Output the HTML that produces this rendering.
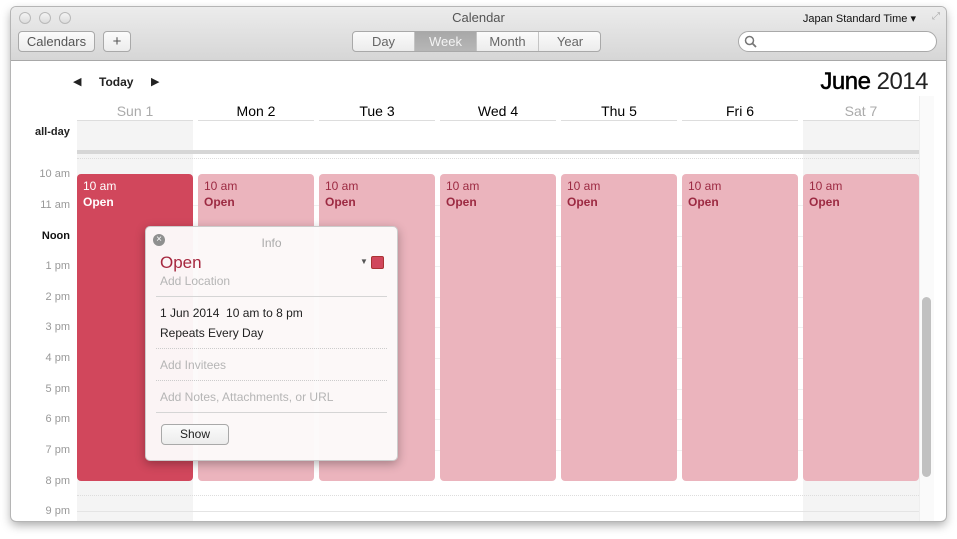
<!DOCTYPE html>
<html><head><style>
*{margin:0;padding:0;box-sizing:border-box}
body{width:957px;height:539px;background:#fff;font-family:"Liberation Sans",sans-serif;position:relative;overflow:hidden}
.win{position:absolute;left:11px;top:7px;width:935px;height:514px;background:#fff;border-radius:5px;box-shadow:0 0 0 1px #b5b5b5,0 4px 10px rgba(0,0,0,.35);overflow:hidden}
.tb{position:absolute;left:0;top:0;width:100%;height:54px;background:linear-gradient(#ececec,#d6d6d6);border-bottom:1px solid #a8a8a8}
.a{position:absolute}
.light{width:12px;height:12px;border-radius:50%;border:1px solid #b9b9b9;background:linear-gradient(#f4f4f4,#dcdcdc);top:5px}
.btn{position:absolute;height:21px;border:1px solid #a9a9a9;border-radius:4px;background:linear-gradient(#fbfbfb,#ececec);font-size:13px;color:#555;text-align:center;line-height:19px}
.seg{position:absolute;top:24px;height:21px;font-size:13px;color:#666;text-align:center;line-height:19px;border-right:1px solid #c4c4c4}
.dh{position:absolute;top:96px;font-size:14px;text-align:center;width:116px}
.dh:after{content:"";position:absolute;left:0;right:0;top:17px;border-top:1px solid #ddd}
.hl{position:absolute;left:0;width:59px;text-align:right;font-size:11px;color:#999}
.ev{position:absolute;top:167px;width:116px;height:307px;background:#ebb4bd;border-radius:4px;padding:5px 6px;font-size:12px;color:#9c2a42}
.ev b{display:block;margin-top:2px}
.line{position:absolute;left:66px;width:842px;border-top:1px solid rgba(0,0,0,.06)}
</style></head><body>
<div class="win">
<div class="tb">
<div class="a light" style="left:8px"></div><div class="a light" style="left:28px"></div><div class="a light" style="left:48px"></div>
<div class="a" style="left:0;width:100%;top:3px;text-align:center;font-size:13px;color:#555">Calendar</div>
<div class="a" style="right:30px;top:5px;font-size:11px;color:#111">Japan Standard Time ▾</div>
<div class="a" style="right:6px;top:4px;font-size:10px;color:#aaa">⤢</div>
<div class="btn" style="left:7px;top:24px;width:77px">Calendars</div>
<div class="btn" style="left:92px;top:24px;width:28px;font-size:15px">+</div>
<div class="a" style="left:341px;top:24px;width:249px;height:21px;border:1px solid #a9a9a9;border-radius:4px;background:linear-gradient(#fbfbfb,#ececec);overflow:hidden">
<div class="seg" style="left:0;top:0;width:62px">Day</div>
<div class="seg" style="left:62px;top:0;width:62px;background:linear-gradient(#a8a8a8,#b8b8b8);color:#f4f4f4">Week</div>
<div class="seg" style="left:124px;top:0;width:62px">Month</div>
<div class="seg" style="left:186px;top:0;width:62px;border:0">Year</div>
</div>
<div class="a" style="left:727px;top:24px;width:199px;height:21px;border:1px solid #a9a9a9;border-radius:11px;background:#fff">
<svg width="14" height="14" style="position:absolute;left:5px;top:3px"><circle cx="5.5" cy="5.5" r="4" stroke="#777" stroke-width="1.5" fill="none"/><path d="M8.5 8.5L12 12" stroke="#777" stroke-width="1.8"/></svg></div>
</div>
<!-- body -->
<div class="a" style="left:66px;top:114px;width:116px;height:400px;background:#f4f4f4"></div>
<div class="a" style="left:792px;top:114px;width:116px;height:400px;background:#f4f4f4"></div>
<div class="a" style="left:62px;top:68px;font-size:11px;color:#222">◀</div>
<div class="a" style="left:88px;top:68px;font-size:12px;font-weight:bold;color:#222">Today</div>
<div class="a" style="left:140px;top:68px;font-size:11px;color:#222">▶</div>
<div class="a" style="right:18px;top:61px;font-size:24px;color:#000;letter-spacing:-.5px"><span style="-webkit-text-stroke:.5px #000">June</span> <span style="color:#222">2014</span></div>
<div class="dh" style="left:66px;color:#aaa">Sun 1</div>
<div class="dh" style="left:187px">Mon 2</div>
<div class="dh" style="left:308px">Tue 3</div>
<div class="dh" style="left:429px">Wed 4</div>
<div class="dh" style="left:550px">Thu 5</div>
<div class="dh" style="left:671px">Fri 6</div>
<div class="dh" style="left:792px;color:#aaa">Sat 7</div>
<div class="a" style="left:24px;top:119px;font-size:11px;font-weight:bold;color:#222">all-day</div>
<div class="a" style="left:66px;top:143px;width:842px;height:4px;background:#d6d6d6"></div>
<div class="line" style="top:151px;border-top:1px dotted #ddd"></div>
<div class="line" style="top:198px"></div><div class="line" style="top:229px"></div><div class="line" style="top:259px"></div><div class="line" style="top:290px"></div><div class="line" style="top:320px"></div><div class="line" style="top:351px"></div><div class="line" style="top:382px"></div><div class="line" style="top:412px"></div><div class="line" style="top:443px"></div><div class="line" style="top:488px;border-top:1px dotted #ddd"></div><div class="line" style="top:504px;border-top:1px solid #e4e4e4"></div>
<div class="hl" style="top:161px">10 am</div><div class="hl" style="top:192px">11 am</div><div class="hl" style="top:223px;color:#111;font-weight:bold">Noon</div><div class="hl" style="top:253px">1 pm</div><div class="hl" style="top:284px">2 pm</div><div class="hl" style="top:314px">3 pm</div><div class="hl" style="top:345px">4 pm</div><div class="hl" style="top:376px">5 pm</div><div class="hl" style="top:406px">6 pm</div><div class="hl" style="top:437px">7 pm</div><div class="hl" style="top:468px">8 pm</div><div class="hl" style="top:498px">9 pm</div>
<div class="ev" style="left:66px;background:#d1475c;color:#fff">10 am<b>Open</b></div>
<div class="ev" style="left:187px">10 am<b>Open</b></div>
<div class="ev" style="left:308px">10 am<b>Open</b></div>
<div class="ev" style="left:429px">10 am<b>Open</b></div>
<div class="ev" style="left:550px">10 am<b>Open</b></div>
<div class="ev" style="left:671px">10 am<b>Open</b></div>
<div class="ev" style="left:792px">10 am<b>Open</b></div>
<div class="a" style="left:908px;top:89px;width:15px;height:425px;background:#fafafa;border-left:1px solid #eee"></div>
<div class="a" style="left:911px;top:290px;width:9px;height:180px;background:#c1c1c1;border-radius:5px"></div>
<!-- popover -->
<div class="a" style="left:134px;top:219px;width:253px;height:235px;background:rgba(252,250,250,.97);border:1px solid #ccc;border-radius:5px;box-shadow:0 3px 10px rgba(0,0,0,.3)">
<div class="a" style="left:7px;top:7px;width:12px;height:12px;border-radius:50%;background:#8f8f8f;color:#fff;font-size:10px;line-height:12px;text-align:center">×</div>
<div class="a" style="left:0;width:100%;top:9px;text-align:center;font-size:12px;color:#aaa">Info</div>
<div class="a" style="left:14px;top:26px;font-size:17px;color:#a6283f">Open</div>
<div class="a" style="left:214px;top:30px;font-size:8px;color:#555">▼</div>
<div class="a" style="left:225px;top:29px;width:13px;height:13px;background:#d1475c;border:1px solid #a33;border-radius:2px"></div>
<div class="a" style="left:14px;top:47px;font-size:12px;color:#b5b5b5">Add Location</div>
<div class="a" style="left:10px;right:10px;top:69px;border-top:1px solid #d5d5d5"></div>
<div class="a" style="left:14px;top:79px;font-size:12px;color:#222">1 Jun 2014&nbsp; 10 am to 8 pm</div>
<div class="a" style="left:14px;top:99px;font-size:12px;color:#222">Repeats Every Day</div>
<div class="a" style="left:10px;right:10px;top:121px;border-top:1px dotted #ccc"></div>
<div class="a" style="left:14px;top:131px;font-size:12px;color:#b5b5b5">Add Invitees</div>
<div class="a" style="left:10px;right:10px;top:153px;border-top:1px dotted #ccc"></div>
<div class="a" style="left:14px;top:163px;font-size:12px;color:#b5b5b5">Add Notes, Attachments, or URL</div>
<div class="a" style="left:10px;right:10px;top:185px;border-top:1px solid #d5d5d5"></div>
<div class="btn" style="left:15px;top:197px;width:68px;font-size:12px;color:#222">Show</div>
</div>
</div>
</body></html>
